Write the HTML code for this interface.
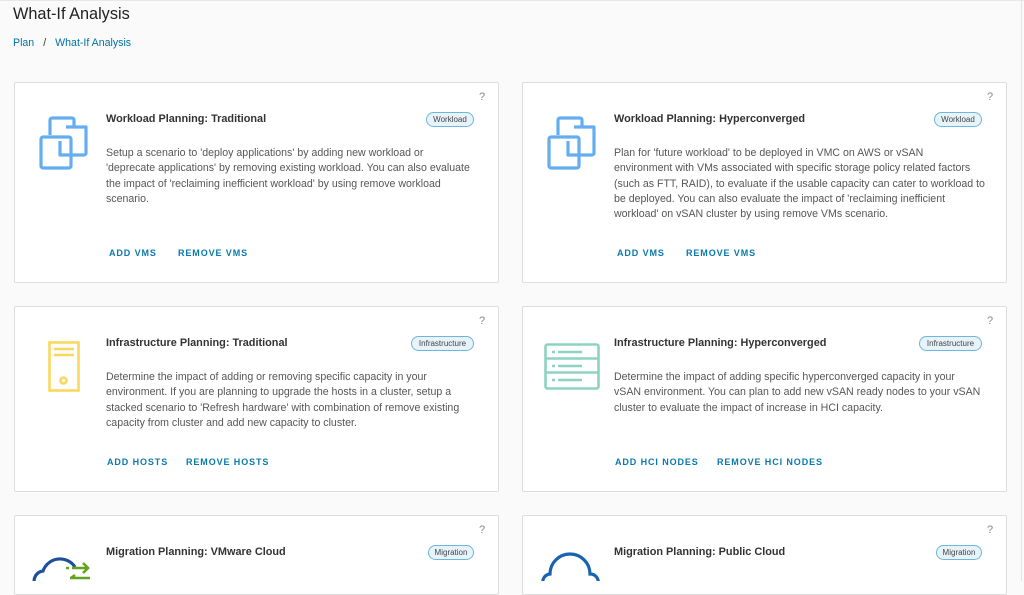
<!DOCTYPE html>
<html><head><meta charset="utf-8"><style>
*{margin:0;padding:0;box-sizing:border-box}
body{width:1024px;height:581px;overflow:hidden;background:#fafafa;font-family:"Liberation Sans",sans-serif;position:relative}
.abs{position:absolute}
h1{position:absolute;left:13px;top:5px;font-size:16.3px;font-weight:normal;color:#222}
.bc{position:absolute;left:13px;top:37px;font-size:10.6px;color:#0072a3}
.bc span{color:#333;margin:0 9px 0 9px}
.card{position:absolute;background:#fff;border:1px solid #ddd;border-radius:2px}
.t{position:absolute;font-size:10.9px;font-weight:bold;color:#333;white-space:nowrap}
.d{position:absolute;font-size:10.6px;line-height:15.3px;color:#565656;white-space:nowrap}
.b{position:absolute;font-size:9px;font-weight:bold;letter-spacing:0.9px;color:#0a79ad;white-space:nowrap}
.badge{position:absolute;height:15px;border:1px solid #6fb6d8;background:#e6f3fa;border-radius:8px;font-size:8px;color:#444;line-height:13px;text-align:center}
.q{position:absolute;font-size:11px;color:#888}
</style></head><body>
<div class="abs" style="left:0;top:0;width:1024px;height:1px;background:#e8e8e8"></div>
<div class="abs" style="left:1021px;top:0;width:1px;height:581px;background:#e4e4e4"></div>
<h1>What-If Analysis</h1>
<div class="bc">Plan<span>/</span>What-If Analysis</div>

<!-- row1 left -->
<div class="card" style="left:14px;top:82px;width:485px;height:201px"></div>
<svg class="abs" style="left:38px;top:115px" width="52" height="56" viewBox="0 0 52 56"><g fill="none" stroke="#64aef0" stroke-width="3.2" stroke-linejoin="round"><path d="M12 20V5a2 2 0 0 1 2-2h20a2 2 0 0 1 2 2v7"/><path d="M28 12h20v26a2 2 0 0 1-2 2H22v-14"/><rect x="3" y="22" width="30" height="31" rx="2"/></g></svg>
<div class="q" style="left:479px;top:91px">?</div>
<div class="t" style="left:106px;top:113px">Workload Planning: Traditional</div>
<div class="badge" style="left:426px;top:112px;width:48px">Workload</div>
<div class="d" style="left:106px;top:146px">Setup a scenario to 'deploy applications' by adding new workload or<br>'deprecate applications' by removing existing workload. You can also evaluate<br>the impact of 'reclaiming inefficient workload' by using remove workload<br>scenario.</div>
<div class="b" style="left:109px;top:248px">ADD VMS</div>
<div class="b" style="left:178px;top:248px">REMOVE VMS</div>

<!-- row1 right -->
<div class="card" style="left:522px;top:82px;width:485px;height:201px"></div>
<svg class="abs" style="left:546px;top:115px" width="52" height="56" viewBox="0 0 52 56"><g fill="none" stroke="#64aef0" stroke-width="3.2" stroke-linejoin="round"><path d="M12 20V5a2 2 0 0 1 2-2h20a2 2 0 0 1 2 2v7"/><path d="M28 12h20v26a2 2 0 0 1-2 2H22v-14"/><rect x="3" y="22" width="30" height="31" rx="2"/></g></svg>
<div class="q" style="left:987px;top:91px">?</div>
<div class="t" style="left:614px;top:113px">Workload Planning: Hyperconverged</div>
<div class="badge" style="left:934px;top:112px;width:48px">Workload</div>
<div class="d" style="left:614px;top:146px">Plan for 'future workload' to be deployed in VMC on AWS or vSAN<br>environment with VMs associated with specific storage policy related factors<br>(such as FTT, RAID), to evaluate if the usable capacity can cater to workload to<br>be deployed. You can also evaluate the impact of 'reclaiming inefficient<br>workload' on vSAN cluster by using remove VMs scenario.</div>
<div class="b" style="left:617px;top:248px">ADD VMS</div>
<div class="b" style="left:686px;top:248px">REMOVE VMS</div>

<!-- row2 left -->
<div class="card" style="left:14px;top:306px;width:485px;height:186px"></div>
<svg class="abs" style="left:48px;top:341px" width="32" height="52" viewBox="0 0 32 52"><g fill="none" stroke="#fbd75e" stroke-width="2.6"><rect x="1.5" y="1.5" width="29" height="48"/><path d="M6 8h20M6 14h20"/><circle cx="15.5" cy="39.5" r="3"/></g></svg>
<div class="q" style="left:479px;top:315px">?</div>
<div class="t" style="left:106px;top:337px">Infrastructure Planning: Traditional</div>
<div class="badge" style="left:411px;top:336px;width:63px">Infrastructure</div>
<div class="d" style="left:106px;top:370px">Determine the impact of adding or removing specific capacity in your<br>environment. If you are planning to upgrade the hosts in a cluster, setup a<br>stacked scenario to 'Refresh hardware' with combination of remove existing<br>capacity from cluster and add new capacity to cluster.</div>
<div class="b" style="left:107px;top:457px">ADD HOSTS</div>
<div class="b" style="left:186px;top:457px">REMOVE HOSTS</div>

<!-- row2 right -->
<div class="card" style="left:522px;top:306px;width:485px;height:186px"></div>
<svg class="abs" style="left:544px;top:343px" width="56" height="48" viewBox="0 0 56 48"><g fill="none" stroke="#8ed3bf" stroke-width="2.6"><rect x="1.5" y="1.5" width="53" height="44" rx="2"/><path d="M1.5 15.5h53M1.5 29.5h53"/></g><g stroke="#8ed3bf" stroke-width="2.6"><path d="M8 9h3M14 9h24M8 23h3M14 23h24M8 37h3M14 37h24"/></g></svg>
<div class="q" style="left:987px;top:315px">?</div>
<div class="t" style="left:614px;top:337px">Infrastructure Planning: Hyperconverged</div>
<div class="badge" style="left:919px;top:336px;width:63px">Infrastructure</div>
<div class="d" style="left:614px;top:370px">Determine the impact of adding specific hyperconverged capacity in your<br>vSAN environment. You can plan to add new vSAN ready nodes to your vSAN<br>cluster to evaluate the impact of increase in HCI capacity.</div>
<div class="b" style="left:615px;top:457px">ADD HCI NODES</div>
<div class="b" style="left:717px;top:457px">REMOVE HCI NODES</div>

<!-- row3 -->
<div class="card" style="left:14px;top:515px;width:485px;height:80px"></div>
<svg class="abs" style="left:30px;top:555px" width="70" height="26" viewBox="0 0 70 26"><path d="M5 30a10 10 0 0 1 8-14a18 18 0 0 1 32-4" fill="none" stroke="#1d4f9c" stroke-width="3.2"/><g stroke="#62a420" stroke-width="2.6" fill="none"><path d="M36 13h3M42 13h16M53 8l5 5-5 5M40 23h20M45 20l-4 3"/></g></svg>
<div class="q" style="left:479px;top:524px">?</div>
<div class="t" style="left:106px;top:546px">Migration Planning: VMware Cloud</div>
<div class="badge" style="left:428px;top:545px;width:46px">Migration</div>

<div class="card" style="left:522px;top:515px;width:485px;height:80px"></div>
<svg class="abs" style="left:540px;top:550px" width="64" height="31" viewBox="0 0 64 31"><path d="M3 34a8 8 0 0 1 7-10a20 20 0 0 1 40 0a8 8 0 0 1 8 10" fill="none" stroke="#1763b0" stroke-width="3.2"/></svg>
<div class="q" style="left:987px;top:524px">?</div>
<div class="t" style="left:614px;top:546px">Migration Planning: Public Cloud</div>
<div class="badge" style="left:936px;top:545px;width:46px">Migration</div>
</body></html>
